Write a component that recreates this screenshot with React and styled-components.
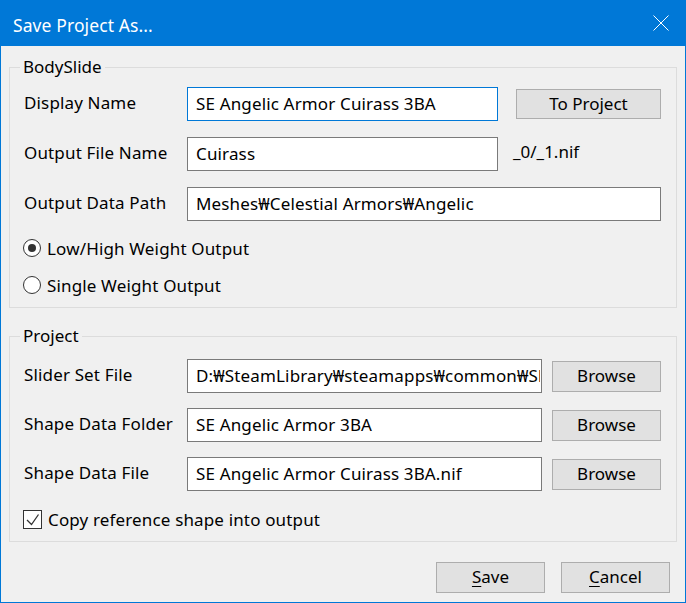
import React from 'react';
import styled, { createGlobalStyle } from 'styled-components';

const GlobalStyle = createGlobalStyle`
  html, body {
    margin: 0;
    padding: 0;
    background: #f0f0f0;
  }
  * {
    box-sizing: border-box;
  }
`;

const UI_FONT = `"Noto Sans", "Noto Sans CJK KR", sans-serif`;

// Width from the start of a row label to the start of its text field.
const LABEL_TRACK = 163;

const Window = styled.div`
  width: 686px;
  height: 603px;
  display: flex;
  flex-direction: column;
  background: #f0f0f0;
  border: 1px solid #0078d7;
  border-top: 0;
  font-family: ${UI_FONT};
  font-size: 17px;
  color: #000;
`;

const TitleBar = styled.div`
  flex: 0 0 46px;
  display: flex;
  align-items: center;
  justify-content: space-between;
  padding: 3px 16px 0 12px;
  background: #0078d7;
  color: #fff;
`;

const Title = styled.span`
  font-size: 17.5px;
  letter-spacing: 0.1px;
`;

const CloseButton = styled.button`
  width: 16px;
  height: 16px;
  padding: 0;
  border: 0;
  background: transparent;
  display: flex;
  margin-top: -3px;
`;

const Content = styled.div`
  flex: 1;
  display: flex;
  flex-direction: column;
  padding: 11px 8px 9px 8px;
`;

const Group = styled.fieldset`
  margin: 0 0 ${(p) => p.$after}px 0;
  padding: 0;
  min-width: 0;
  border: 1px solid #dcdcdc;
`;

const Legend = styled.legend`
  margin-left: 10px;
  padding: 0 3px;
  line-height: 20px;
  font-size: 17px;
`;

const GroupBody = styled.div`
  display: flex;
  flex-direction: column;
  padding: ${(p) => p.$top}px 0 9px 14px;
`;

const FieldGrid = styled.div`
  display: grid;
  grid-template-columns: ${(p) => LABEL_TRACK - p.$gap}px ${(p) => p.$field}px ${(p) => p.$side}px;
  grid-auto-rows: 34px;
  column-gap: ${(p) => p.$gap}px;
  row-gap: ${(p) => p.$rowGap}px;
  align-items: center;
`;

const FieldLabel = styled.label`
  white-space: nowrap;
  letter-spacing: 0.15px;
  padding-bottom: 3px;
`;

const TextField = styled.input`
  width: 100%;
  height: 34px;
  grid-column: ${(p) => (p.$wide ? '2 / 4' : 'auto')};
  margin: 0;
  padding: 0 1px 2px 8px;
  border: 1px solid ${(p) => (p.$focused ? '#0078d7' : '#7a7a7a')};
  border-radius: 0;
  background: #fff;
  font: inherit;
  letter-spacing: 0.15px;
  color: #000;
  outline: none;
`;

const Suffix = styled.span`
  margin-left: -3px;
  padding-bottom: 6px;
`;

const PushButton = styled.button`
  width: ${(p) => p.$w}px;
  height: ${(p) => p.$h}px;
  margin: 0;
  padding: 0 0 2px;
  border: 1px solid #adadad;
  border-radius: 0;
  background: #e1e1e1;
  font: inherit;
  color: #000;
`;

const Mnemonic = styled.span`
  text-decoration: underline;
  text-underline-offset: 3px;
  text-decoration-thickness: 1px;
`;

const OptionList = styled.div`
  display: flex;
  flex-direction: column;
  gap: 11px;
  margin-top: ${(p) => p.$top}px;
`;

const Option = styled.label`
  height: 26px;
  display: flex;
  align-items: center;
  gap: 6px;
  margin-left: -1px;
  letter-spacing: 0.15px;
`;

const RadioMark = styled.span`
  width: 18px;
  height: 18px;
  flex: 0 0 18px;
  display: flex;
  align-items: center;
  justify-content: center;
  border: 1px solid #333;
  border-radius: 50%;
  background: #fff;

  &::after {
    content: '';
    width: 8px;
    height: 8px;
    border-radius: 50%;
    background: ${(p) => (p.$checked ? '#333' : 'transparent')};
  }
`;

const CheckMark = styled.span`
  width: 19px;
  height: 19px;
  flex: 0 0 19px;
  display: flex;
  border: 1px solid #333;
  background: #fff;
`;

const ButtonRow = styled.div`
  display: flex;
  justify-content: flex-end;
  gap: 16px;
  padding-right: 7px;
`;

const CloseIcon = () => (
  <svg width="16" height="16" viewBox="0 0 16 16">
    <path d="M0.5 0.5 L15.5 15.5 M15.5 0.5 L0.5 15.5" stroke="#fff" strokeWidth="1" fill="none" />
  </svg>
);

const Tick = () => (
  <svg width="17" height="17" viewBox="0 0 17 17">
    <polyline points="3,9 7.5,13.5 14.5,3.5" stroke="#333" strokeWidth="1.3" fill="none" />
  </svg>
);

const Radio = ({ checked, children }) => (
  <Option>
    <RadioMark $checked={checked} />
    {children}
  </Option>
);

const Checkbox = ({ checked, children }) => (
  <Option>
    <CheckMark>{checked && <Tick />}</CheckMark>
    {children}
  </Option>
);

const projectRows = [
  {
    label: 'Slider Set File',
    value:
      'D:₩SteamLibrary₩steamapps₩common₩Skyrim Special Edition₩CalienteTools₩BodySlide₩SliderSets₩SE Angelic Armor 3BA.osp',
  },
  { label: 'Shape Data Folder', value: 'SE Angelic Armor 3BA' },
  { label: 'Shape Data File', value: 'SE Angelic Armor Cuirass 3BA.nif' },
];

export default function App() {
  return (
    <>
      <GlobalStyle />
      <Window>
        <TitleBar>
          <Title>Save Project As...</Title>
          <CloseButton aria-label="Close">
            <CloseIcon />
          </CloseButton>
        </TitleBar>

        <Content>
          <Group $after={18}>
            <Legend>BodySlide</Legend>
            <GroupBody $top={10}>
              <FieldGrid $field={311} $side={145} $gap={18} $rowGap={16}>
                <FieldLabel>Display Name</FieldLabel>
                <TextField $focused readOnly defaultValue="SE Angelic Armor Cuirass 3BA" />
                <PushButton $w={145} $h={30}>To Project</PushButton>

                <FieldLabel>Output File Name</FieldLabel>
                <TextField readOnly defaultValue="Cuirass" />
                <Suffix>_0/_1.nif</Suffix>

                <FieldLabel>Output Data Path</FieldLabel>
                <TextField $wide readOnly defaultValue="Meshes₩Celestial Armors₩Angelic" />
              </FieldGrid>

              <OptionList $top={14}>
                <Radio checked>Low/High Weight Output</Radio>
                <Radio>Single Weight Output</Radio>
              </OptionList>
            </GroupBody>
          </Group>

          <Group $after={20}>
            <Legend>Project</Legend>
            <GroupBody $top={13}>
              <FieldGrid $field={355} $side={109} $gap={10} $rowGap={15}>
                {projectRows.map((row) => (
                  <React.Fragment key={row.label}>
                    <FieldLabel>{row.label}</FieldLabel>
                    <TextField readOnly defaultValue={row.value} />
                    <PushButton $w={109} $h={31}>Browse</PushButton>
                  </React.Fragment>
                ))}
              </FieldGrid>

              <OptionList $top={15}>
                <Checkbox checked>Copy reference shape into output</Checkbox>
              </OptionList>
            </GroupBody>
          </Group>

          <ButtonRow>
            <PushButton $w={109} $h={31}>
              <Mnemonic>S</Mnemonic>ave
            </PushButton>
            <PushButton $w={109} $h={31}>
              <Mnemonic>C</Mnemonic>ancel
            </PushButton>
          </ButtonRow>
        </Content>
      </Window>
    </>
  );
}
